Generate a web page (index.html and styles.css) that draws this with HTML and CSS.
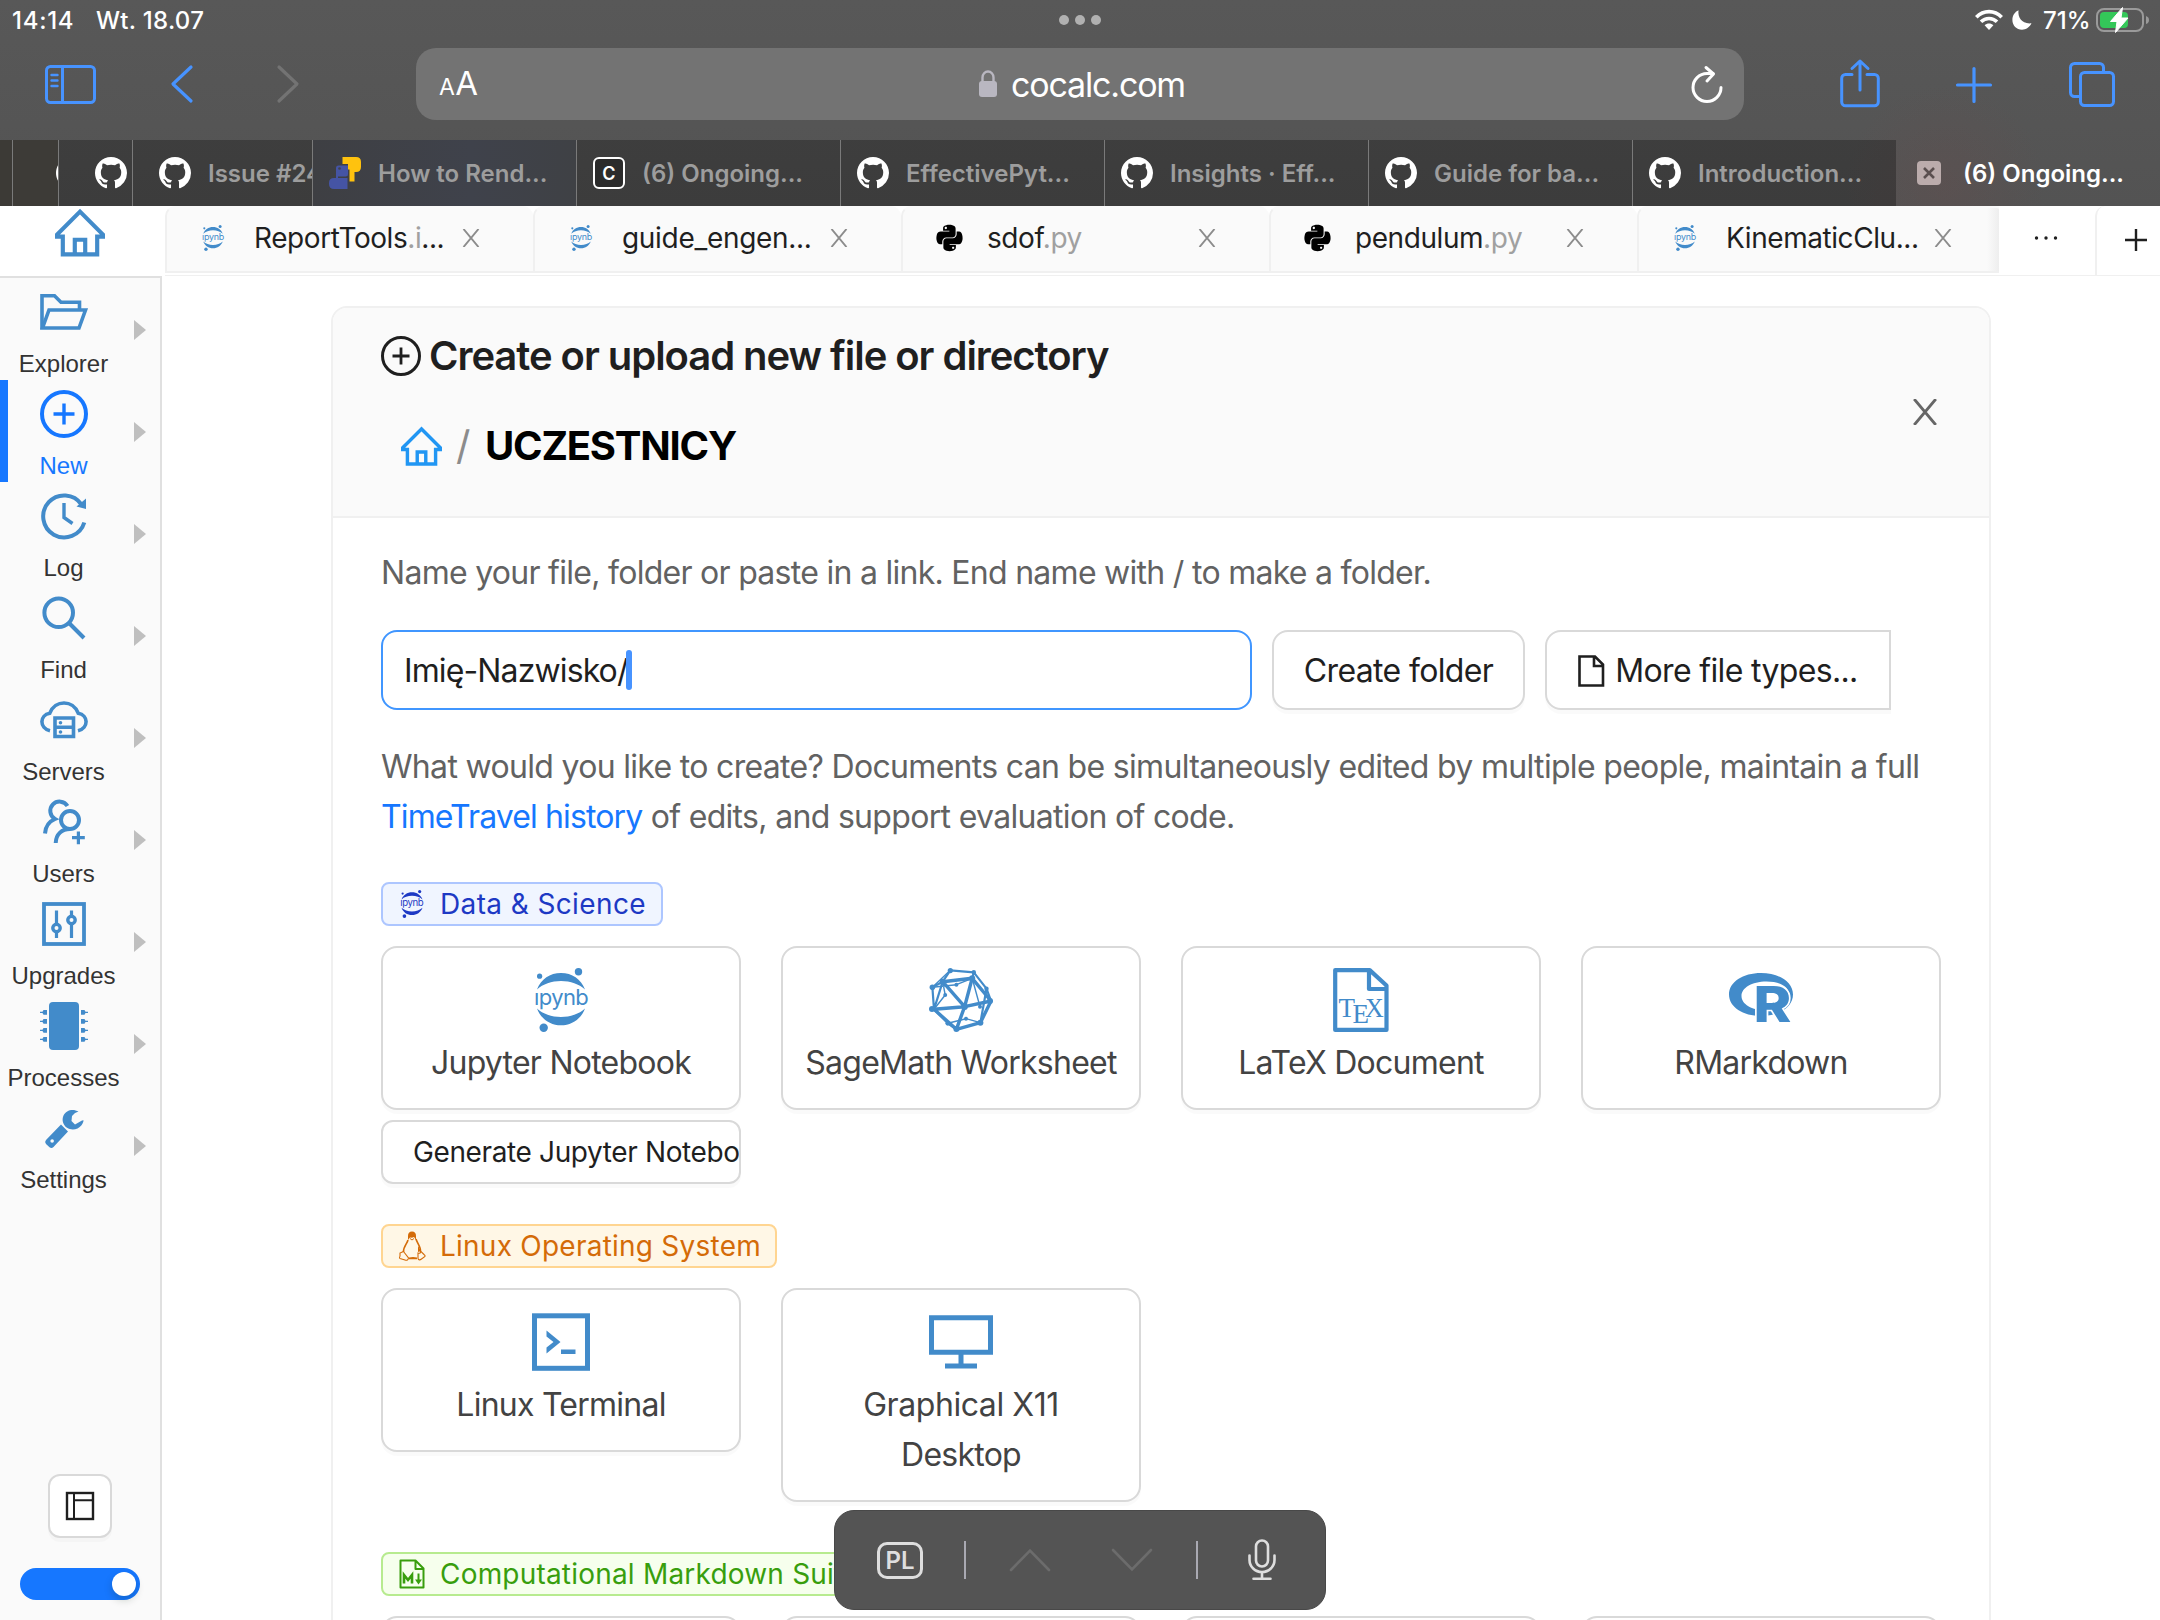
FILE: index.html
```html
<!DOCTYPE html>
<html lang="en">
<head>
<meta charset="utf-8">
<title>(6) Ongoing - CoCalc</title>
<link rel="stylesheet" href="styles.css">
</head>
<body>
<svg class="sprite" aria-hidden="true">
  <symbol id="github" viewBox="0 0 16 16"><path fill="currentColor" d="M8 0C3.58 0 0 3.58 0 8c0 3.54 2.29 6.53 5.47 7.59.4.07.55-.17.55-.38 0-.19-.01-.82-.01-1.49-2.01.37-2.53-.49-2.69-.94-.09-.23-.48-.94-.82-1.13-.28-.15-.68-.52-.01-.53.63-.01 1.08.58 1.23.82.72 1.21 1.87.87 2.33.66.07-.52.28-.87.51-1.07-1.78-.2-3.64-.89-3.64-3.95 0-.87.31-1.59.82-2.15-.08-.2-.36-1.02.08-2.12 0 0 .67-.21 2.2.82.64-.18 1.32-.27 2-.27s1.36.09 2 .27c1.53-1.04 2.2-.82 2.2-.82.44 1.1.16 1.92.08 2.12.51.56.82 1.27.82 2.15 0 3.07-1.87 3.75-3.65 3.95.29.25.54.73.54 1.48 0 1.07-.01 1.93-.01 2.2 0 .21.15.46.55.38A8.01 8.01 0 0 0 16 8c0-4.42-3.58-8-8-8z"/></symbol>
  <symbol id="python" viewBox="0 0 448 512"><path fill="currentColor" d="M439.8 200.5c-7.7-30.9-22.3-54.2-53.4-54.2h-40.1v47.4c0 36.8-31.2 67.8-66.8 67.8H172.7c-29.2 0-53.4 25-53.4 54.3v101.8c0 29 25.2 46 53.4 54.3 33.8 9.9 66.3 11.7 106.8 0 26.9-7.8 53.4-23.5 53.4-54.3v-40.7H226.2v-13.6h160.2c31.1 0 42.6-21.7 53.4-54.2 11.2-33.5 10.7-65.7 0-108.6zM286.2 404c11.1 0 20.1 9.1 20.1 20.3 0 11.3-9 20.4-20.1 20.4-11 0-20.1-9.2-20.1-20.4.1-11.3 9.1-20.3 20.1-20.3zM167.8 248.1h106.8c29.7 0 53.4-24.5 53.4-54.3V91.9c0-29-24.4-50.7-53.4-55.6-35.8-5.9-74.7-5.6-106.8.1-45.2 8-53.4 24.7-53.4 55.6v40.7h106.9v13.6h-147c-31.1 0-58.3 18.7-66.8 54.2-9.8 40.7-10.2 66.1 0 108.6 7.6 31.6 25.7 54.2 56.8 54.2H101v-48.8c0-35.3 30.5-66.4 66.8-66.4zm-6.7-142.6c-11.1 0-20.1-9.1-20.1-20.3.1-11.3 9-20.4 20.1-20.4 11 0 20.1 9.2 20.1 20.4s-9 20.3-20.1 20.3z"/></symbol>
  <symbol id="ipynb" viewBox="0 0 64 64"><g fill="currentColor"><path d="M8 21.5C12 11 21 5 32 5s20 6 24 16.500C50 16 41.500 13 32 13S14 16 8 21.500z"/><path d="M8 40.500C12 51 21 57.300 32 57.300s20-6.300 24-16.800C50 46 41.500 49 32 49s-18-3-24-8.500z"/><circle cx="49.500" cy="3.700" r="3.700"/><circle cx="10.600" cy="8.200" r="2.600"/><circle cx="14.700" cy="59.700" r="4.200"/><text x="32" y="36.500" font-size="22" text-anchor="middle" textLength="54">ıpynb</text></g></symbol>
  <symbol id="home" viewBox="0 0 48 48"><path fill="none" stroke="currentColor" stroke-width="4" d="M24 3.500 2 25.500v2h5.500V44.500h33V27.500H46v-2zM19 44V30.500h10V44"/></symbol>
  <symbol id="close" viewBox="0 0 24 24"><path fill="none" stroke="currentColor" stroke-width="2.600" d="M2 0 22 24M22 0 2 24"/></symbol>
  <symbol id="tri" viewBox="0 0 12 20"><path fill="#bfbfbf" d="M0 0 12 10 0 20z"/></symbol>
</svg>

<header class="chrome">
  <div class="status">
    <span class="time">14:14</span><span class="date">Wt. 18.07</span>
    <span class="dots"><i></i><i></i><i></i></span>
    <span class="indicators">
      <svg class="wifi" width="28" height="20" viewBox="0 0 28 20"><g fill="none" stroke="#fff" stroke-width="3.600"><path d="M1.300 7.200C8.500-.2 19.500-.2 26.700 7.200"/><path d="M6 11.800c4.500-4.400 11.500-4.400 16 0"/></g><path fill="#fff" d="M9.600 15.300c2.500-2.400 6.300-2.400 8.800 0L14 20z"/></svg>
      <svg class="moon" width="20" height="20" viewBox="0 0 20 20"><path fill="#fff" d="M6.500.3C5.500 8 10.500 14.500 19.500 13.300 17.500 17.500 14 19.700 10 19.700 4.500 19.700.4 15.500.4 10 .4 5.500 2.800 2 6.500.3z"/></svg>
      <span class="pct">71%</span>
      <svg width="54" height="32" viewBox="0 0 54 32"><rect x="1" y="5" width="46" height="22" rx="7" fill="none" stroke="#9a9a9a" stroke-width="2"/><path d="M50 12q3 1 3 4t-3 4z" fill="#9a9a9a"/><rect x="4" y="8" width="28" height="16" rx="4" fill="#34c759"/><path d="M26.500 3.500 14.500 17.500H21L19.500 28.500 32 14H25z" fill="#fff" stroke="#fff" stroke-width="1"/></svg>
    </span>
  </div>
  <div class="toolbar">
    <svg class="ic-side" width="52" height="40" viewBox="0 0 52 40"><g fill="none" stroke="#4793ff" stroke-width="3"><rect x="1.500" y="1.500" width="48" height="36" rx="4"/><path d="M17.500 2v36"/><path d="M6.500 10h6M6.500 15.500h6M6.500 21h6" stroke-width="2.400" stroke-linecap="round"/></g></svg>
    <svg class="ic-back" width="24" height="38" viewBox="0 0 24 38"><path d="M21 2 3 19l18 17" fill="none" stroke="#4793ff" stroke-width="3.200" stroke-linecap="round" stroke-linejoin="round"/></svg>
    <svg class="ic-fwd" width="24" height="38" viewBox="0 0 24 38"><path d="M3 2l18 17L3 36" fill="none" stroke="#737373" stroke-width="3.200" stroke-linecap="round" stroke-linejoin="round"/></svg>
    <div class="url">
      <span class="aa"><small>A</small>A</span>
      <span class="site"><svg width="18" height="28" viewBox="0 0 18 28"><rect y="11" width="18" height="16" rx="3" fill="#b9b7c1"/><path d="M3.500 12V7.500a5.500 6 0 0 1 11 0V12" fill="none" stroke="#b9b7c1" stroke-width="2.400"/></svg>cocalc.com</span>
      <svg class="reload" width="34" height="38" viewBox="0 0 34 38"><g fill="none" stroke="#fff" stroke-width="3" stroke-linecap="round" stroke-linejoin="round"><path d="M31 22.500A14 14 0 1 1 17 8.500h6"/><path d="M16 2.500 23.500 9 17 16"/></g></svg>
    </div>
    <svg class="ic-share" width="40" height="50" viewBox="0 0 40 50"><g fill="none" stroke="#4793ff" stroke-width="3" stroke-linecap="round" stroke-linejoin="round"><path d="M12 15.500H5.500a3.800 3.800 0 0 0-3.800 3.800V43a3.800 3.800 0 0 0 3.800 3.800h29a3.800 3.800 0 0 0 3.800-3.800V19.300a3.800 3.800 0 0 0-3.800-3.800H27M20 31V2M12 9.500 20 2l8 7.500"/></g></svg>
    <svg class="ic-plus" width="36" height="36" viewBox="0 0 36 36"><path d="M18 1.500v33M1.500 18h33" stroke="#4793ff" stroke-width="3.200" stroke-linecap="round"/></svg>
    <svg class="ic-tabs" width="46" height="46" viewBox="0 0 46 46"><g fill="none" stroke="#4793ff" stroke-width="3"><path d="M11.500 34.500H5.500a4 4 0 0 1-4-4V5.500a4 4 0 0 1 4-4h25a4 4 0 0 1 4 4v5"/><rect x="11.500" y="10.500" width="33" height="33" rx="4"/></g></svg>
  </div>
  <nav class="tabs">
    <div class="tab t0"></div>
    <div class="tab t1"><svg class="fav"><use href="#github"/></svg></div>
    <div class="tab t2"><svg class="fav"><use href="#github"/></svg></div>
    <div class="tab t3"><svg class="fav"><use href="#github"/></svg><span>Issue #24</span></div>
    <div class="tab"><svg class="fav" viewBox="0 0 32 32"><path fill="#ffc20e" d="M13.500 0H27q5 0 5 5v5q0 5-5 5h-1.500v9.500h-5V12.500H15V9.500h4V7h-5.500z"/><path fill="#4554a4" d="M9.500 8.500H19V17q0 2.500-2.500 2.500H9V21h9.500v11H5q-5 0-5-5v-1q0-5 5-5h2V11q0-2.500 2.500-2.500z"/><circle cx="10.500" cy="11.500" r="1.300" fill="#3f434c"/></svg><span>How to Rend...</span></div>
    <div class="tab"><svg class="fav" viewBox="0 0 32 32"><rect x="1" y="1" width="30" height="30" rx="5" fill="#2b2b2b" stroke="#fff" stroke-width="2"/><text x="16" y="22.500" text-anchor="middle" font-size="18" font-weight="600" fill="#fff">C</text></svg><span>(6) Ongoing...</span></div>
    <div class="tab"><svg class="fav"><use href="#github"/></svg><span>EffectivePyt...</span></div>
    <div class="tab"><svg class="fav"><use href="#github"/></svg><span>Insights · Eff...</span></div>
    <div class="tab"><svg class="fav"><use href="#github"/></svg><span>Guide for ba...</span></div>
    <div class="tab"><svg class="fav"><use href="#github"/></svg><span>Introduction...</span></div>
    <div class="tab active"><svg class="kill" width="24" height="24" viewBox="0 0 24 24"><rect width="24" height="24" rx="4" fill="#bbacac"/><path d="M7 7l10 10M17 7 7 17" stroke="#5a4f4f" stroke-width="2.600"/></svg><span>(6) Ongoing...</span></div>
  </nav>
</header>

<div class="filebar">
  <div class="homebtn"><svg width="50" height="50"><use href="#home"/></svg></div>
  <div class="files">
    <div class="file"><svg class="ft"><use href="#ipynb"/></svg><span class="fn">ReportTools<em>.i</em>...</span><svg class="x"><use href="#close"/></svg></div>
    <div class="file"><svg class="ft"><use href="#ipynb"/></svg><span class="fn wide">guide_engen...</span><svg class="x"><use href="#close"/></svg></div>
    <div class="file"><svg class="ft py"><use href="#python"/></svg><span class="fn">sdof<em>.py</em></span><svg class="x"><use href="#close"/></svg></div>
    <div class="file"><svg class="ft py"><use href="#python"/></svg><span class="fn">pendulum<em>.py</em></span><svg class="x"><use href="#close"/></svg></div>
    <div class="file"><svg class="ft"><use href="#ipynb"/></svg><span class="fn">KinematicClu...</span><svg class="x"><use href="#close"/></svg></div>
  </div>
  <div class="more"><svg width="24" height="6" viewBox="0 0 24 6"><g fill="#1f1f1f"><circle cx="2.500" cy="3" r="1.700"/><circle cx="12" cy="3" r="1.700"/><circle cx="21.500" cy="3" r="1.700"/></g></svg></div>
  <div class="add"><svg width="22" height="22" viewBox="0 0 22 22"><path d="M11 0v22M0 11h22" stroke="#1f1f1f" stroke-width="2.400"/></svg></div>
</div>

<div class="main">
  <aside class="side">
    <div class="item"><svg class="si" viewBox="0 0 48 48"><g fill="none" stroke="currentColor" stroke-width="3.600"><path d="M2 41V7.800h12.500l6.500 6.400h18.500V22"/><path d="M9 22h36.500L39 40H2.500z"/></g></svg><b>Explorer</b><svg class="tri"><use href="#tri"/></svg></div>
    <div class="item on"><svg class="si" viewBox="0 0 48 48"><g fill="none" stroke="currentColor"><circle cx="24" cy="24" r="22" stroke-width="4"/><path stroke-width="3.400" d="M24 13.500v21M13.500 24h21"/></g></svg><b>New</b><svg class="tri"><use href="#tri"/></svg></div>
    <div class="item"><svg class="si" viewBox="0 0 48 48"><path fill="none" stroke="currentColor" stroke-width="4" d="M41.500 12.500A21 21 0 1 0 44.300 30.500"/><path fill="none" stroke="currentColor" stroke-width="3.400" d="M24 11v14.500l8.500 6"/><path fill="currentColor" d="M46 6.500v10.500l-9.500-2.500z"/></svg><b>Log</b><svg class="tri"><use href="#tri"/></svg></div>
    <div class="item"><svg class="si" viewBox="0 0 48 48"><g fill="none" stroke="currentColor" stroke-width="4"><circle cx="18.700" cy="18.700" r="14.300"/><path d="M29 29l15 15"/></g></svg><b>Find</b><svg class="tri"><use href="#tri"/></svg></div>
    <div class="item"><svg class="si" viewBox="0 0 48 48"><g fill="none" stroke="currentColor" stroke-width="3.600"><path d="M10 34.800C-1 32-.5 19 9.800 17.200 15 3.500 33 3.500 38.200 17.200 48.500 19 49 32 38 34.800"/><path d="M15 22h18.500v18.500H15zM15 31.200h18.500"/></g><circle cx="20.500" cy="26.700" r="1.800" fill="currentColor"/><circle cx="20.500" cy="36" r="1.800" fill="currentColor"/></svg><b>Servers</b><svg class="tri"><use href="#tri"/></svg></div>
    <div class="item"><svg class="si" viewBox="0 0 48 48"><g fill="none" stroke="currentColor" stroke-width="4"><circle cx="30" cy="22" r="9"/><path d="M15.700 45C16 36 22 31 30 31"/><path d="M27.500 8A9.300 9.300 0 1 0 15 21C9 23.500 5.500 28 5 35.500"/><path stroke-width="3.200" d="M38.400 33.500v12.800M32 39.700h12.800"/></g></svg><b>Users</b><svg class="tri"><use href="#tri"/></svg></div>
    <div class="item"><svg class="si" viewBox="0 0 48 48"><g fill="none" stroke="currentColor"><rect x="4" y="4" width="40" height="40" stroke-width="3.800"/><path stroke-width="3.200" d="M16.500 10.500V24M16.500 32v6M31.500 10.500V16M31.500 24v14"/><circle cx="16.500" cy="28" r="3.700" stroke-width="3.400"/><circle cx="31.500" cy="20" r="3.700" stroke-width="3.400"/></g></svg><b>Upgrades</b><svg class="tri"><use href="#tri"/></svg></div>
    <div class="item"><svg class="si" viewBox="0 0 48 48"><g fill="currentColor"><rect x="9" width="30" height="48" rx="4"/><path id="pin" d="M0 9.800h2.500l1-1.800H7v4.800H3.500l-1-1.800H0z"/><use href="#pin" y="9"/><use href="#pin" y="18"/><use href="#pin" y="27"/><g transform="matrix(-1 0 0 1 48 0)"><use href="#pin"/><use href="#pin" y="9"/><use href="#pin" y="18"/><use href="#pin" y="27"/></g></g></svg><b>Processes</b><svg class="tri"><use href="#tri"/></svg></div>
    <div class="item"><svg class="si" viewBox="0 0 48 48"><path fill="currentColor" d="M38.500 7.500C33 4.300 26 6 23.500 11.500c-2 4.500-.5 9.500 3.500 12.300 4.500 3 11 2 14.500-2.500 1.500-2 2.200-4.200 2-5l-1.500.2-7 4-3.500-3.500.5-5 3-3z"/><path fill="currentColor" fill-rule="evenodd" d="M21 20.500 6 36q-1.800 2 0 4l3.500 3.300q2 1.500 4-.2L28 27.500zM12.200 35.200a1.800 1.800 0 1 1-.1 3.600 1.800 1.800 0 0 1 .1-3.600z"/></svg><b>Settings</b><svg class="tri"><use href="#tri"/></svg></div>
    <div class="layout-btn"><svg width="30" height="30" viewBox="0 0 30 30"><g fill="none" stroke="#1f1f1f"><rect x="2" y="2" width="26" height="26" stroke-width="2.400"/><path stroke-width="2" d="M9 2v26M9 9.300h19"/></g></svg></div>
    <div class="switch"><i></i></div>
  </aside>

  <main class="content">
    <section class="card">
      <div class="card-head">
        <div class="titles">
          <h1><svg width="40" height="40" viewBox="0 0 40 40"><g fill="none" stroke="#1f1f1f"><circle cx="20" cy="20" r="18.500" stroke-width="3"/><path d="M20 11.500v17M11.500 20h17" stroke-width="2.800"/></g></svg>Create or upload new file or directory</h1>
          <div class="crumb"><svg width="41" height="41"><use href="#home"/></svg><i>/</i><strong>UCZESTNICY</strong></div>
        </div>
        <svg class="card-x" width="26" height="26"><use href="#close"/></svg>
      </div>
      <div class="card-body">
        <p>Name your file, folder or paste in a link. End name with / to make a folder.</p>
        <div class="inputs">
          <div class="field">Imię-Nazwisko/<i class="caret"></i></div>
          <div class="btn b1">Create folder</div>
          <div class="btn b2"><svg width="27" height="32" viewBox="0 0 27 32"><path d="M1.500 1.500H17l8 8V30.500H1.500zM16 2v9h9" fill="none" stroke="#1f1f1f" stroke-width="2.600"/></svg>More file types...</div>
        </div>
        <p class="what">What would you like to create? Documents can be simultaneously edited by multiple people, maintain a full<br><a>TimeTravel history</a> of edits, and support evaluation of code.</p>

        <div class="tag blue"><svg width="28" height="30"><use href="#ipynb"/></svg>Data &amp; Science</div>
        <div class="grid">
          <div class="col">
            <div class="tile"><svg><use href="#ipynb"/></svg>Jupyter Notebook</div>
            <div class="gen">Generate Jupyter Notebook</div>
          </div>
          <div class="tile"><svg viewBox="0 0 64 64"><g fill="none" stroke="currentColor" stroke-linejoin="round"><path stroke-width="3.400" d="M13.700 13.700 43.200 10.300 35.600 38.700zM5 41.300l30.600-2.600-8.200 22.600zM35.600 38.700 62 33 43.200 10.300M27.400 61.300l24-6.600L62 33"/><path stroke-width="2.200" d="M21.300 2.300 44.800 4.300 57.500 20.700 62 33M21.300 2.300 13.700 13.700 3.400 19.300 5 41.300 13.700 13.700M44.800 4.300 43.200 10.300M57.500 20.700 51.400 54.700M5 41.300l13.800 14 8.600 6"/><path stroke-width="1.400" d="M3.400 19.300l24-2.600 15.800-6.400M13.700 13.700l2.500 13.300L5 41.300M18.800 55.300l18.200-4.600 14.400 4M43.200 10.300 51 38.700M3.400 19.300 21.300 2.300"/></g><g fill="currentColor"><circle cx="21.300" cy="2.600" r="2.600"/><circle cx="44.800" cy="4.300" r="2.200"/><circle cx="13.700" cy="13.700" r="3"/><circle cx="43.200" cy="10.300" r="3"/><circle cx="3.400" cy="19.300" r="2.800"/><circle cx="57.500" cy="20.700" r="2.200"/><circle cx="61" cy="33" r="3"/><circle cx="35.600" cy="38.700" r="3.200"/><circle cx="3" cy="41" r="3"/><circle cx="27.400" cy="61" r="3"/><circle cx="51.400" cy="54.700" r="3"/><circle cx="27.400" cy="16.700" r="2"/><circle cx="16.200" cy="27" r="2"/><circle cx="18.800" cy="55.300" r="2.400"/><circle cx="37" cy="50.700" r="2"/><circle cx="51" cy="38.700" r="2"/></g></svg>SageMath Worksheet</div>
          <div class="tile"><svg viewBox="0 0 64 64"><path fill="none" stroke="currentColor" stroke-width="4.200" stroke-linejoin="round" d="M6.200 2.100h34.500L57.500 17.500v44.400H6.200zM40 3v18h17.500"/><g class="tex" fill="currentColor" font-size="27"><text x="9.500" y="49">T</text><text x="23.500" y="54.500">E</text><text x="36" y="49" textLength="18" lengthAdjust="spacingAndGlyphs">X</text></g></svg>LaTeX Document</div>
          <div class="tile"><svg viewBox="0 0 64 64"><path fill="currentColor" fill-rule="evenodd" d="M32 5C50 5 64 14 64 26.500S50 48 32 48 0 39 0 26.500 14 5 32 5zm5.500 8.500C22.500 13.500 12.500 20 12.500 28S22.500 42.500 37.500 42.500 60.500 36.500 60.500 28 52 13.500 37.500 13.500z"/><text x="24.500" y="54" font-size="50" font-weight="800" fill="currentColor" stroke="#fff" stroke-width="3" paint-order="stroke" textLength="37" lengthAdjust="spacingAndGlyphs">R</text></svg>RMarkdown</div>
        </div>

        <div class="tag orange"><svg width="28" height="30" viewBox="0 0 28 30"><g fill="none" stroke="currentColor" stroke-width="1.100"><path d="M10 9C9 13 5 16 5.500 21M18 8c1 4 5 8 4.500 12.500" stroke-width="1.600"/><path d="M5.500 20.500l5 6.500q-.5 3-3.500 2l-5-1.500q-1-.5 0-2.500v-3zM22.500 20q.5 3-2.500 2v5.500q1 2.500 3.500.5l3.500-2.500q.5-1-1-2z"/></g><path fill="currentColor" d="M10 9V5q0-4.500 4-4.500T18 5v4l-2-3-2 .8-2-.3zM11 26.500q4-1 8 0v1.800h-8zM20 15l3 5-3 1z"/><path d="M12 7.500l2 1.500 2-1.500" fill="none" stroke="currentColor"/></svg>Linux Operating System</div>
        <div class="grid g2">
          <div class="tile"><svg viewBox="0 0 64 64"><rect x="5.500" y="5.800" width="53" height="52.500" fill="none" stroke="currentColor" stroke-width="5"/><path d="M17.500 20.500 31.500 32 17.500 43.500v-6l7-5.500-7-5.500z" fill="currentColor"/><path d="M32 39.500h14.500v4.500H32z" fill="currentColor"/></svg>Linux Terminal</div>
          <div class="tile"><svg viewBox="0 0 64 64"><path d="M2.500 7.800h59v34.500h-59z" fill="none" stroke="currentColor" stroke-width="5"/><path d="M29.500 42h5v11.500H48V58.500H16V53.500h13.500z" fill="currentColor"/></svg><span class="gx">Graphical X11</span><br>Desktop</div>
        </div>

        <div class="tag green"><svg width="28" height="30" viewBox="0 0 28 30"><path fill="none" stroke="currentColor" stroke-width="2" stroke-linejoin="round" d="M2.500 1.500H17.500l8 8V28.500h-23zM17.500 2v8h8"/><path fill="none" stroke="currentColor" stroke-width="2.600" d="M6 24.500V16l4 5 4-5v8.500"/><path fill="none" stroke="currentColor" stroke-width="2" d="M20.500 14.500V22"/><path fill="currentColor" d="M17 20.500h7l-3.500 5z"/></svg>Computational Markdown Suite</div>
        <div class="grid"><div class="tile"></div><div class="tile"></div><div class="tile"></div><div class="tile"></div></div>
      </div>
    </section>
  </main>
</div>

<div class="kbar">
  <span class="lang">PL</span>
  <i class="sep s1"></i>
  <svg class="up" width="42" height="24" viewBox="0 0 42 24"><path d="M2 22 21 2.500 40 22" fill="none" stroke="#6c6c6c" stroke-width="2.600" stroke-linecap="round"/></svg>
  <svg class="down" width="42" height="24" viewBox="0 0 42 24"><path d="M2 2l19 19.500L40 2" fill="none" stroke="#6c6c6c" stroke-width="2.600" stroke-linecap="round"/></svg>
  <i class="sep s2"></i>
  <svg class="mic" width="28" height="42" viewBox="0 0 28 42"><g fill="none" stroke="#dedede" stroke-width="2.600" stroke-linecap="round"><rect x="8" y="1.500" width="12" height="26" rx="6"/><path d="M1.500 16.500V21a12.500 12 0 0 0 25 0v-4.500M14 33.500v6M5.500 39.800h17"/></g></svg>
</div>
</body>
</html>
```
FILE: styles.css
```css
* { box-sizing: border-box; }
html, body { margin: 0; width: 2160px; height: 1620px; overflow: hidden; }
body {
  position: relative; display: flex; flex-direction: column; background: #fff;
  font-family: Inter, "Liberation Sans", sans-serif; color: #1f1f1f;
}
svg { display: block; flex: none; overflow: visible; }
.sprite { display: none; }
i, em, b { font-style: normal; font-weight: 400; }

/* browser chrome */
.chrome {
  height: 206px; flex: none; color: #fff;
  background:
    radial-gradient(circle at 1945px 185px, rgba(105,75,75,.3), transparent 100px),
    linear-gradient(#585858, #555 60%, #535353);
}
.status { height: 40px; display: flex; align-items: center; padding: 0 10px 0 12px; font-size: 24px; font-weight: 500; }
.time { width: 84px; letter-spacing: .03em; }
.date { width: 963px; letter-spacing: .012em; }
.dots { display: flex; gap: 6px; }
.dots i { width: 10px; height: 10px; border-radius: 50%; background: #b0b0b0; }
.indicators { margin-left: auto; display: flex; align-items: center; }
.moon { margin-left: 9px; }
.pct { margin: 0 5px 0 11px; width: 48px; white-space: nowrap; }

.toolbar { height: 100px; display: flex; align-items: center; padding-bottom: 12px; }
.ic-side { margin-left: 45px; margin-top: 2px; }
.ic-back { margin-left: 73px; }
.ic-fwd { margin-left: 82px; }
.url {
  margin-left: 116px; width: 1328px; height: 72px; border-radius: 20px;
  background: #737373; display: flex; align-items: center; padding: 0 20px 0 23px;
}
.aa { width: 540px; padding-top: 2px; font-size: 33px; letter-spacing: .01em; line-height: 70px; }
.aa small { font-size: 23px; }
.site { display: flex; align-items: center; gap: 14px; font-size: 34px; letter-spacing: -.0345em; }
.reload { margin-left: auto; }
.ic-share { margin: 0 0 0 96px; }
.ic-plus { margin: 1px 0 0 76px; }
.ic-tabs { margin: 1px 0 0 77px; }

.tabs { height: 66px; display: flex; overflow: hidden; }
.tab {
  width: 264px; flex: none; display: flex; align-items: center; overflow: hidden; padding-left: 16px;
  background: rgba(0,0,0,.27); border-left: 1px solid #7a7a7a;
  font-size: 24px; font-weight: 600; color: #9d9d9d; white-space: nowrap;
}
.tab:nth-child(5) { background: linear-gradient(90deg, #3e3f43, #3f424b 60%, #3f4145); }
.fav { width: 32px; height: 32px; color: #fff; margin-right: 17px; }
.t0 { width: 12px; border-left: 0; background: #3c3a36; padding: 0; }
.t1 { width: 46px; background: #3d3b37; padding-left: 43px; }
.t2 { width: 74px; padding-left: 36px; }
.t3 { width: 180px; padding-left: 26px; }
.active { background: none; border-left: 0; color: #fff; padding-left: 21px; }
.kill { margin-right: 22px; }

/* open file tabs */
.filebar { height: 70px; flex: none; display: flex; }
.homebtn { width: 165px; padding: 2px 0 0 55px; color: #428bca; }
.files {
  width: 1834px; display: flex; overflow: hidden; border-bottom: 1px solid #f0f0f0;
}
.file {
  width: 368px; height: 67px; flex: none; display: flex; align-items: center;
  padding: 0 0 4px 33px; background: #fafafa; border: 2px solid #f0f0f0; border-top-color: #fafafa;
  border-right-width: 0; border-radius: 10px 10px 0 0; font-size: 28px; letter-spacing: -.0155em; white-space: nowrap;
}
.file:last-child { background: linear-gradient(90deg, #fafafa 348px, #ececec 362px); }
.ft { width: 26px; height: 28px; color: #428bca; }
.ft.py { width: 27px; height: 30px; color: #000; }
.fn { width: 208px; margin-left: 28px; }
.wide { letter-spacing: -.011em; }
.py + .fn { margin-left: 24px; width: 211px; }
.fn em { color: #a0a0a0; }
.x { width: 18px; height: 18px; color: #8c8c8c; }
.more { width: 96px; padding: 29px 0 0 35px; border-bottom: 1px solid #f0f0f0; }
.add { flex: 1; padding: 23px 0 0 28px; border-left: 2px solid #f0f0f0; border-bottom: 1px solid #f0f0f0; border-radius: 10px 0 0; }

/* left navigation */
.main { flex: 1; display: flex; min-height: 0; }
.side {
  width: 162px; flex: none; background: #fafafa; border: 2px solid #e0e0e0; border-left: 0; border-bottom: 0;
  display: flex; flex-direction: column;
}
.item {
  height: 102px; flex: none; display: grid; grid-template-columns: 128px 32px; grid-template-rows: 48px 28px;
  row-gap: 14px; padding-top: 10px; color: #428bca; font-family: "Liberation Sans", Arial, sans-serif;
}
.item.on { color: #1677ff; box-shadow: inset 8px 0 #1677ff; }
.si { width: 48px; height: 48px; justify-self: center; }
.item b { grid-row: 2; padding-right: 1px; font-size: 24px; line-height: 28px; text-align: center; color: #333; }
.item.on b { color: #1677ff; }
.tri { grid-column: 2; grid-row: 1; width: 12px; height: 20px; margin: 32px 0 0 6px; }
.layout-btn {
  margin: auto 0 0 48px; width: 64px; height: 64px; border: 2px solid #d9d9d9; border-radius: 12px; background: #fff;
  display: grid; place-items: center; box-shadow: 0 4px 0 rgba(0,0,0,.02); flex: none;
}
.switch {
  margin: 30px 0 20px 20px; width: 120px; height: 32px; border-radius: 16px; background: #1677ff; flex: none;
  display: flex; justify-content: flex-end; padding: 4px;
}
.switch i { width: 24px; height: 24px; border-radius: 50%; background: #fff; box-shadow: 0 4px 8px rgba(0,35,11,.2); }

/* new file card */
.content { flex: 1; padding: 30px 169px 0 169px; overflow: hidden; }
.card { border: 2px solid #f0f0f0; border-radius: 16px 16px 0 0; height: 1400px; }
.card-head {
  height: 210px; background: #fafafa; border-bottom: 2px solid #f0f0f0; border-radius: 14px 14px 0 0;
  display: flex; padding: 18px 51px 0 48px; justify-content: space-between; align-items: flex-start;
}
h1 { margin: 0; display: flex; align-items: center; gap: 8px; font-size: 40px; line-height: 60px; font-weight: 600; letter-spacing: -.0262em; }
.crumb { margin-top: 30px; padding-left: 20px; display: flex; align-items: center; font-size: 40px; line-height: 60px; color: #2196f3; }
.crumb i { margin: 0 17px 0 14px; width: 12px; color: #8c8c8c; }
.crumb strong { color: #000; font-weight: 700; letter-spacing: -.0304em; }
.card-x { margin-top: 73px; color: #666; }
.card-body { padding: 30px 48px 0; font-size: 32px; letter-spacing: -.0225em; line-height: 50px; }
p { margin: 0; color: #626262; white-space: nowrap; }
p a { color: #1677ff; letter-spacing: -.0275em; }
.inputs { margin-top: 32px; display: flex; line-height: 76px; height: 80px; }
.field { width: 871px; border: 2px solid #4096ff; border-radius: 16px; padding: 2px 0 0 21px; letter-spacing: -.0275em; display: flex; align-items: center; }
.caret { width: 6px; height: 40px; border-radius: 3px; background: #4793ff; margin: -2px 0 0 -2px; }
.btn { border: 2px solid #d9d9d9; border-radius: 16px; display: flex; align-items: center; justify-content: center; box-shadow: 0 4px 0 rgba(0,0,0,.02); letter-spacing: -.0205em; padding-top: 1px; }
.b1 { width: 253px; margin-left: 20px; }
.b2 { width: 346px; margin-left: 20px; gap: 10px; border-radius: 16px 0 0 16px; }
.what { margin-top: 32px; line-height: 50.3px; letter-spacing: -.0213em; }

.tag {
  width: fit-content; height: 44px; border: 2px solid; border-radius: 8px; display: flex; align-items: center; gap: 14px;
  padding: 0 14px 0 15px; font-size: 28px; letter-spacing: .0085em; white-space: nowrap;
}
.blue { margin-top: 39px; letter-spacing: .0136em; padding-right: 15px; color: #1d39c4; background: #f0f5ff; border-color: #adc6ff; }
.orange { margin-top: 40px; color: #d46b08; background: #fff7e6; border-color: #ffd591; }
.green { margin-top: 50px; letter-spacing: .007em; color: #389e0d; background: #f6ffed; border-color: #b7eb8f; }
.grid { margin-top: 20px; display: grid; grid-template-columns: repeat(4, 360px); gap: 40px; align-items: start; }
.tile {
  min-height: 164px; border: 2px solid #d9d9d9; border-radius: 16px; padding: 20px 0 19px; color: #434343; background: #fff;
  text-align: center; letter-spacing: -.0235em; box-shadow: 0 4px 0 rgba(0,0,0,.02);
}
.g2 .tile + .tile { padding-bottom: 20px; }
.gx { letter-spacing: -.0135em; }
.tile svg { width: 64px; height: 64px; margin: 0 auto 6px; color: #428bca; }
.tile:not(.g2 .tile + .tile) { height: 164px; }
.tex { font-family: "Liberation Serif", serif; }
.gen {
  margin-top: 10px; height: 64px; border: 2px solid #d9d9d9; border-radius: 12px; padding-left: 30px; overflow: hidden;
  font-size: 28px; line-height: 61px; letter-spacing: -.0135em; white-space: nowrap; box-shadow: 0 4px 0 rgba(0,0,0,.02);
}

/* floating keyboard bar */
.kbar {
  position: absolute; left: 834px; top: 1510px; width: 492px; height: 100px; border-radius: 20px; background: #545454;
  border: 1px solid #484848; display: flex; align-items: center; padding-left: 42px;
}
.lang { width: 46px; height: 37px; border: 3px solid #dedede; border-radius: 10px; color: #dedede; font-size: 24px; font-weight: 600; line-height: 31px; text-align: center; }
.sep { width: 2px; height: 38px; background: #a9a9b2; }
.s1 { margin-left: 41px; }
.up { margin-left: 43px; }
.down { margin-left: 60px; }
.s2 { margin-left: 43px; }
.mic { margin-left: 50px; }
```
